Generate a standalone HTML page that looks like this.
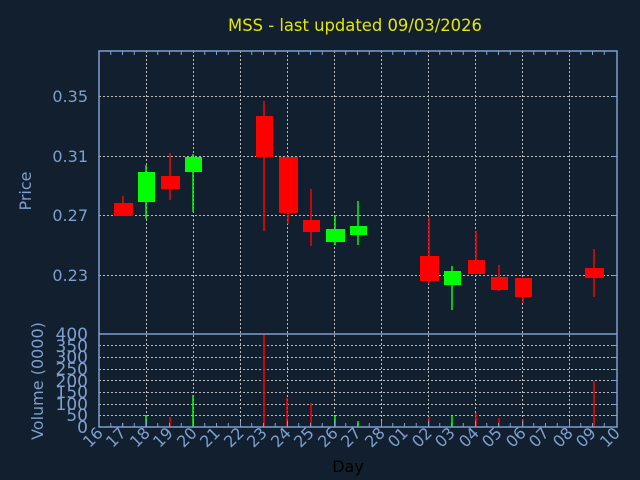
<!DOCTYPE html>
<html><head><meta charset="utf-8"><style>
html,body{margin:0;padding:0;background:#111f2f;}
svg{display:block;font-family:"DejaVu Sans","Liberation Sans",sans-serif;}
</style></head><body>
<svg width="640" height="480" viewBox="0 0 640 480" xmlns="http://www.w3.org/2000/svg">
<rect width="640" height="480" fill="#111f2f"/>
<text x="355" y="31" fill="#e6e600" font-size="16.4" text-anchor="middle">MSS - last updated 09/03/2026</text>
<g stroke="#bbbbbb" stroke-width="1" stroke-dasharray="2,2">
<line x1="99" y1="96.5" x2="617" y2="96.5"/>
<line x1="99" y1="156.5" x2="617" y2="156.5"/>
<line x1="99" y1="215.5" x2="617" y2="215.5"/>
<line x1="99" y1="275.5" x2="617" y2="275.5"/>
<line x1="99" y1="345.5" x2="617" y2="345.5"/>
<line x1="99" y1="357.5" x2="617" y2="357.5"/>
<line x1="99" y1="369.5" x2="617" y2="369.5"/>
<line x1="99" y1="380.5" x2="617" y2="380.5"/>
<line x1="99" y1="392.5" x2="617" y2="392.5"/>
<line x1="99" y1="404.5" x2="617" y2="404.5"/>
<line x1="99" y1="415.5" x2="617" y2="415.5"/>
<line x1="146.5" y1="51" x2="146.5" y2="427"/>
<line x1="193.5" y1="51" x2="193.5" y2="427"/>
<line x1="240.5" y1="51" x2="240.5" y2="427"/>
<line x1="287.5" y1="51" x2="287.5" y2="427"/>
<line x1="334.5" y1="51" x2="334.5" y2="427"/>
<line x1="381.5" y1="51" x2="381.5" y2="427"/>
<line x1="428.5" y1="51" x2="428.5" y2="427"/>
<line x1="475.5" y1="51" x2="475.5" y2="427"/>
<line x1="522.5" y1="51" x2="522.5" y2="427"/>
<line x1="569.5" y1="51" x2="569.5" y2="427"/>
</g>
<g stroke-width="1.5">
<line x1="123" y1="196" x2="123" y2="203" stroke="#f00"/><rect x="114" y="203" width="19" height="13" fill="#f00"/>
<line x1="146" y1="165" x2="146" y2="219" stroke="#0f0"/><rect x="138" y="172" width="17" height="30" fill="#0f0"/>
<line x1="170" y1="153" x2="170" y2="200" stroke="#f00"/><rect x="161" y="176" width="19" height="13" fill="#f00"/>
<line x1="193" y1="154" x2="193" y2="212" stroke="#0f0"/><rect x="185" y="157" width="17" height="15" fill="#0f0"/>
<line x1="264" y1="101" x2="264" y2="231" stroke="#f00"/><rect x="256" y="116" width="17" height="41" fill="#f00"/>
<line x1="288" y1="157" x2="288" y2="224" stroke="#f00"/><rect x="279" y="157" width="19" height="56" fill="#f00"/>
<line x1="311" y1="189" x2="311" y2="246" stroke="#f00"/><rect x="303" y="220" width="17" height="12" fill="#f00"/>
<line x1="335" y1="215" x2="335" y2="245" stroke="#0f0"/><rect x="326" y="229" width="19" height="13" fill="#0f0"/>
<line x1="358" y1="201" x2="358" y2="245" stroke="#0f0"/><rect x="350" y="226" width="17" height="9" fill="#0f0"/>
<line x1="429" y1="217" x2="429" y2="284" stroke="#f00"/><rect x="420" y="256" width="19" height="25" fill="#f00"/>
<line x1="452" y1="266" x2="452" y2="310" stroke="#0f0"/><rect x="444" y="271" width="17" height="14" fill="#0f0"/>
<line x1="476" y1="231" x2="476" y2="273" stroke="#f00"/><rect x="468" y="260" width="17" height="14" fill="#f00"/>
<line x1="499" y1="265" x2="499" y2="291" stroke="#f00"/><rect x="491" y="277" width="17" height="13" fill="#f00"/>
<line x1="523" y1="278" x2="523" y2="303" stroke="#f00"/><rect x="515" y="278" width="17" height="19" fill="#f00"/>
<line x1="594" y1="249" x2="594" y2="297" stroke="#f00"/><rect x="585" y="268" width="19" height="10" fill="#f00"/>
</g>
<g stroke-width="1.5">
<line x1="123" y1="423" x2="123" y2="427" stroke="#f00"/>
<line x1="146" y1="415" x2="146" y2="427" stroke="#0f0"/>
<line x1="170" y1="417" x2="170" y2="427" stroke="#f00"/>
<line x1="193" y1="395" x2="193" y2="427" stroke="#0f0"/>
<line x1="264" y1="334" x2="264" y2="427" stroke="#f00"/>
<line x1="287" y1="398" x2="287" y2="427" stroke="#f00"/>
<line x1="311" y1="403" x2="311" y2="427" stroke="#f00"/>
<line x1="335" y1="416" x2="335" y2="427" stroke="#0f0"/>
<line x1="358" y1="421" x2="358" y2="427" stroke="#0f0"/>
<line x1="429" y1="417" x2="429" y2="427" stroke="#f00"/>
<line x1="452" y1="416" x2="452" y2="427" stroke="#0f0"/>
<line x1="476" y1="413" x2="476" y2="427" stroke="#f00"/>
<line x1="499" y1="418" x2="499" y2="427" stroke="#f00"/>
<line x1="523" y1="419" x2="523" y2="427" stroke="#f00"/>
<line x1="594" y1="381" x2="594" y2="427" stroke="#f00"/>
</g>
<g stroke="#7f9fcf" stroke-width="1.5" fill="none">
<rect x="99" y="51" width="518" height="376"/>
<line x1="99" y1="334" x2="617" y2="334"/>
</g>
<g stroke="#7f9fcf" stroke-width="1">
<path d="M110.75 51v4M122.5 51v4M134.25 51v4M157.75 51v4M169.5 51v4M181.25 51v4M204.75 51v4M216.5 51v4M228.25 51v4M251.75 51v4M263.5 51v4M275.25 51v4M298.75 51v4M310.5 51v4M322.25 51v4M345.75 51v4M357.5 51v4M369.25 51v4M392.75 51v4M404.5 51v4M416.25 51v4M439.75 51v4M451.5 51v4M463.25 51v4M486.75 51v4M498.5 51v4M510.25 51v4M533.75 51v4M545.5 51v4M557.25 51v4M580.75 51v4M592.5 51v4M604.25 51v4"/>
<path d="M110.75 427v-4M122.5 427v-4M134.25 427v-4M146.5 427v-6M157.75 427v-4M169.5 427v-4M181.25 427v-4M193.5 427v-6M204.75 427v-4M216.5 427v-4M228.25 427v-4M240.5 427v-6M251.75 427v-4M263.5 427v-4M275.25 427v-4M287.5 427v-6M298.75 427v-4M310.5 427v-4M322.25 427v-4M334.5 427v-6M345.75 427v-4M357.5 427v-4M369.25 427v-4M381.5 427v-6M392.75 427v-4M404.5 427v-4M416.25 427v-4M428.5 427v-6M439.75 427v-4M451.5 427v-4M463.25 427v-4M475.5 427v-6M486.75 427v-4M498.5 427v-4M510.25 427v-4M522.5 427v-6M533.75 427v-4M545.5 427v-4M557.25 427v-4M569.5 427v-6M580.75 427v-4M592.5 427v-4M604.25 427v-4"/>
<path d="M617 345.5h-5M617 357.5h-5M617 369.5h-5M617 380.5h-5M617 392.5h-5M617 404.5h-5M617 415.5h-5M617 96.5h-5M617 156.5h-5M617 215.5h-5M617 275.5h-5"/>
</g>
<g fill="#7f9fcf" font-size="16" text-anchor="end">
<text x="88" y="102">0.35</text>
<text x="88" y="162">0.31</text>
<text x="88" y="221">0.27</text>
<text x="88" y="281">0.23</text>
</g>
<g fill="#7f9fcf" font-size="17" text-anchor="end">
<text x="88" y="340">400</text>
<text x="88" y="352">350</text>
<text x="88" y="363">300</text>
<text x="88" y="375">250</text>
<text x="88" y="387">200</text>
<text x="88" y="398">150</text>
<text x="88" y="410">100</text>
<text x="88" y="421">50</text>
<text x="88" y="433">0</text>
</g>
<text transform="translate(31,191) rotate(-90)" fill="#7f9fcf" font-size="16" text-anchor="middle">Price</text>
<text transform="translate(43,381) rotate(-90)" fill="#7f9fcf" font-size="16" text-anchor="middle">Volume (0000)</text>
<g fill="#7f9fcf" font-size="16" text-anchor="end">
<text transform="translate(104,434) rotate(-45)">16</text>
<text transform="translate(127,434) rotate(-45)">17</text>
<text transform="translate(151,434) rotate(-45)">18</text>
<text transform="translate(174,434) rotate(-45)">19</text>
<text transform="translate(198,434) rotate(-45)">20</text>
<text transform="translate(221,434) rotate(-45)">21</text>
<text transform="translate(245,434) rotate(-45)">22</text>
<text transform="translate(268,434) rotate(-45)">23</text>
<text transform="translate(292,434) rotate(-45)">24</text>
<text transform="translate(315,434) rotate(-45)">25</text>
<text transform="translate(339,434) rotate(-45)">26</text>
<text transform="translate(362,434) rotate(-45)">27</text>
<text transform="translate(386,434) rotate(-45)">28</text>
<text transform="translate(409,434) rotate(-45)">01</text>
<text transform="translate(433,434) rotate(-45)">02</text>
<text transform="translate(456,434) rotate(-45)">03</text>
<text transform="translate(480,434) rotate(-45)">04</text>
<text transform="translate(503,434) rotate(-45)">05</text>
<text transform="translate(527,434) rotate(-45)">06</text>
<text transform="translate(550,434) rotate(-45)">07</text>
<text transform="translate(574,434) rotate(-45)">08</text>
<text transform="translate(597,434) rotate(-45)">09</text>
<text transform="translate(621,434) rotate(-45)">10</text>
</g>
<text x="348" y="472" fill="#000000" font-size="16" text-anchor="middle">Day</text>
</svg>
</body></html>
